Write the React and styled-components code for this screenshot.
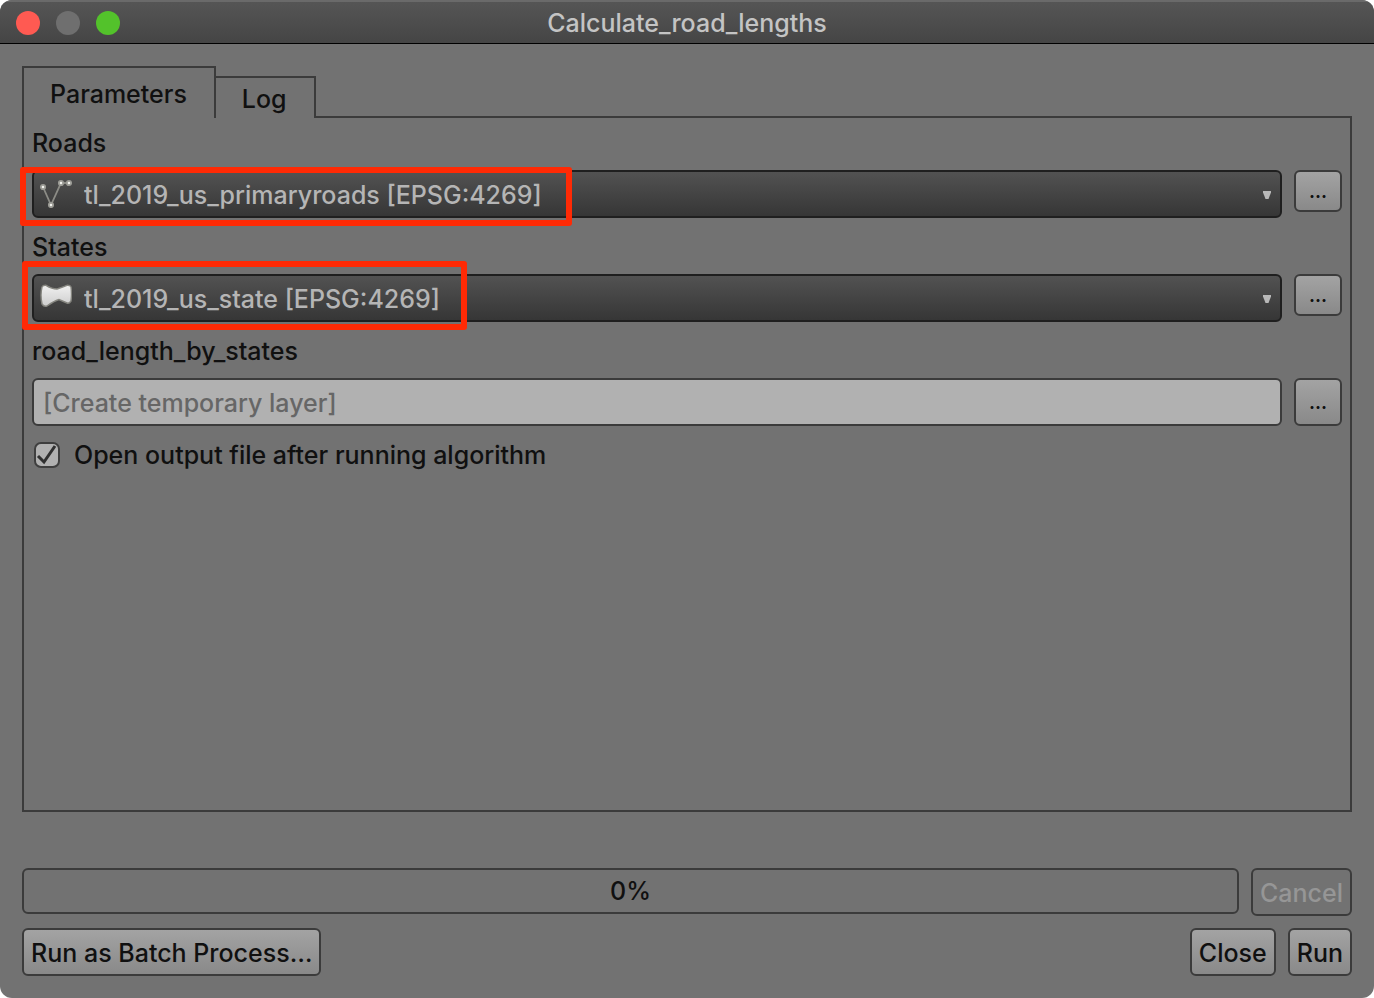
import React, { useState } from "react";
import styled, { createGlobalStyle } from "styled-components";

const GlobalStyle = createGlobalStyle`
  *, *::before, *::after { box-sizing: border-box; }
  body { margin: 0; background: #fff; }
  body, button, input, select {
    font-family: Inter, "Liberation Sans", sans-serif;
    font-size: 25px;
    font-weight: 500;
    line-height: 30px;
    color: #101010;
  }
`;

const Window = styled.div`
  display: flex;
  flex-direction: column;
  min-height: 100vh;
  background: #727272;
  border-radius: 12px;
  overflow: hidden;
`;

const TitleBar = styled.header`
  display: grid;
  grid-template-columns: 1fr auto 1fr;
  align-items: center;
  height: 44px;
  padding: 0 16px;
  background: linear-gradient(#555, #454545);
  border-top: 2px solid #6a6a6a;
  border-bottom: 1px solid #000;
`;

const WindowButtons = styled.div`
  display: flex;
  gap: 16px;
`;

const WindowButton = styled.button`
  width: 24px;
  height: 24px;
  padding: 0;
  border: 0;
  border-radius: 50%;
  background: ${({ $color }) => $color};
`;

const Title = styled.h1`
  margin: 0;
  font-size: 25px;
  font-weight: 500;
  color: #c4c4c4;
`;

const Body = styled.main`
  flex: 1;
  display: flex;
  flex-direction: column;
  padding: 22px;
`;

const TabBar = styled.div`
  display: flex;
  align-items: flex-end;
  &::after {
    content: "";
    flex: 1;
    border-bottom: 2px solid #3b3b3b;
  }
`;

const Tab = styled.button`
  height: ${({ $active }) => ($active ? 52 : 42)}px;
  padding: 2px 27px 0 26px;
  border: 2px solid #3b3b3b;
  border-bottom: 0;
  border-left-width: ${({ $active }) => ($active ? 2 : 0)}px;
  background: none;
`;

const Panel = styled.section`
  flex: 1;
  display: flex;
  flex-direction: column;
  gap: 14px;
  padding: 10px 8px;
  border: 2px solid #3b3b3b;
  border-top: 0;
`;

const Field = styled.div`
  display: flex;
  flex-direction: column;
  gap: 12px;
`;

const FieldRow = styled.div`
  display: flex;
  align-items: flex-start;
  gap: 12px;
`;

const SelectBox = styled.div`
  position: relative;
  flex: 1;
  display: flex;
`;

const Select = styled.select`
  appearance: none;
  flex: 1;
  height: 48px;
  padding: 2px 40px 0 50px;
  border: 2px solid #1f1f1f;
  border-radius: 6px;
  background: linear-gradient(#525252, #363636);
  color: #b5b5b5;
`;

const LayerIcon = styled.svg`
  position: absolute;
  left: 8px;
  top: 6px;
  width: 32px;
  height: 32px;
  pointer-events: none;
`;

const Arrow = styled.svg`
  position: absolute;
  right: 11px;
  top: 21px;
  width: 8px;
  height: 8px;
  pointer-events: none;
`;

const Highlight = styled.span`
  position: absolute;
  left: ${({ $left }) => $left}px;
  top: ${({ $top }) => $top}px;
  bottom: -8px;
  width: ${({ $width }) => $width}px;
  border: 6px solid #ff2a05;
  border-radius: 3px;
  pointer-events: none;
`;

const TextInput = styled.input`
  flex: 1;
  min-width: 0;
  height: 48px;
  padding: 2px 9px 0;
  border: 2px solid #3b3b3b;
  border-radius: 6px;
  background: #b1b1b1;
  &::placeholder { color: #666; opacity: 1; }
`;

const Button = styled.button`
  height: 48px;
  padding: 2px 7px 0;
  border: 2px solid #3b3b3b;
  border-radius: 6px;
  background: linear-gradient(#a3a3a3, #898989);
  &:disabled { background: none; color: #969696; }
`;

const BrowseButton = styled(Button)`
  width: 48px;
  height: ${({ $tall }) => ($tall ? 48 : 42)}px;
  padding: 2px 0 0;
  font-size: 18px;
  font-weight: 700;
`;

const CheckRow = styled.label`
  display: flex;
  align-items: center;
  gap: 14px;
  padding-left: 2px;
`;

const CheckBox = styled.span`
  position: relative;
  display: flex;
`;

const CheckInput = styled.input`
  appearance: none;
  width: 26px;
  height: 26px;
  margin: 0;
  border: 2px solid #3f3f3f;
  border-radius: 7px;
  background: #b1b1b1;
  &:not(:checked) + svg { display: none; }
`;

const CheckMark = styled.svg`
  position: absolute;
  inset: 0;
  width: 26px;
  height: 26px;
  pointer-events: none;
`;

const ProgressRow = styled.div`
  display: flex;
  align-items: flex-start;
  gap: 12px;
  margin-top: 56px;
`;

const Progress = styled.div`
  flex: 1;
  display: flex;
  align-items: center;
  justify-content: center;
  height: 46px;
  border: 2px solid #3b3b3b;
  border-radius: 6px;
`;

const Footer = styled.footer`
  display: flex;
  justify-content: space-between;
  margin-top: 12px;
`;

const FooterActions = styled.div`
  display: flex;
  gap: 12px;
`;

const LineIcon = () => (
  <LayerIcon viewBox="0 0 32 32" aria-hidden="true">
    <path d="M3 11 11 29 21 7H29" fill="none" stroke="#8c8c86" strokeWidth="1.8" />
    {[[3, 11], [11, 29], [21, 7], [29, 7]].map(([x, y]) => (
      <circle key={`${x}-${y}`} cx={x} cy={y} r="2.200" fill="#f2f2ee" stroke="#9a9a94" strokeWidth="1.8" />
    ))}
  </LayerIcon>
);

const PolygonIcon = () => (
  <LayerIcon viewBox="0 0 32 32" aria-hidden="true">
    <defs>
      <linearGradient id="polygon-fill" x1="0" y1="0" x2="0" y2="1">
        <stop offset="0" stopColor="#f0f0f0" />
        <stop offset="1" stopColor="#cdcdcd" />
      </linearGradient>
    </defs>
    <path
      d="M2 7Q3 5 6 5.300Q12 9 17 9Q23 7 27 5.300Q30 5 31 7Q32 14 31 21Q29 24 27 23L19 19.500Q14 21 7 26Q4 27 2 24Q0 15 2 7Z"
      fill="url(#polygon-fill)"
      stroke="#85857f"
      strokeWidth="1.4"
    />
  </LayerIcon>
);

function LayerField({ id, label, layer, icon, mark }) {
  return (
    <Field>
      <label htmlFor={id}>{label}</label>
      <FieldRow>
        <SelectBox>
          <Select id={id}>
            <option>{layer}</option>
          </Select>
          {icon}
          <Arrow viewBox="0 0 8 8" aria-hidden="true">
            <path d="M0 0H8V1.500L5.500 8H2.500L0 1.500Z" fill="#b8b8b8" />
          </Arrow>
          <Highlight $left={mark.left} $top={mark.top} $width={mark.width} />
        </SelectBox>
        <BrowseButton type="button" aria-label={`Browse ${label}`}>…</BrowseButton>
      </FieldRow>
    </Field>
  );
}

export default function App() {
  const [open, setOpen] = useState(true);
  return (
    <>
      <GlobalStyle />
      <Window>
        <TitleBar>
          <WindowButtons>
            <WindowButton $color="#ff5a52" aria-label="Close window" />
            <WindowButton $color="#6f6f6f" aria-label="Minimize window" />
            <WindowButton $color="#53c22b" aria-label="Zoom window" />
          </WindowButtons>
          <Title>Calculate_road_lengths</Title>
        </TitleBar>
        <Body>
          <TabBar role="tablist">
            <Tab role="tab" aria-selected="true" $active>Parameters</Tab>
            <Tab role="tab" aria-selected="false">Log</Tab>
          </TabBar>
          <Panel role="tabpanel">
            <LayerField
              id="roads"
              label="Roads"
              layer="tl_2019_us_primaryroads [EPSG:4269]"
              icon={<LineIcon />}
              mark={{ left: -12, top: -3, width: 552 }}
            />
            <LayerField
              id="states"
              label="States"
              layer="tl_2019_us_state [EPSG:4269]"
              icon={<PolygonIcon />}
              mark={{ left: -10, top: -13, width: 445 }}
            />
            <Field>
              <label htmlFor="output">road_length_by_states</label>
              <FieldRow>
                <TextInput id="output" placeholder="[Create temporary layer]" />
                <BrowseButton type="button" aria-label="Browse output" $tall>…</BrowseButton>
              </FieldRow>
            </Field>
            <CheckRow>
              <CheckBox>
                <CheckInput type="checkbox" checked={open} onChange={(e) => setOpen(e.target.checked)} />
                <CheckMark viewBox="0 0 26 26" aria-hidden="true">
                  <path d="M4 14 10 20 21 4" fill="none" stroke="#303030" strokeWidth="3" />
                </CheckMark>
              </CheckBox>
              Open output file after running algorithm
            </CheckRow>
          </Panel>
          <ProgressRow>
            <Progress role="progressbar" aria-valuemin={0} aria-valuemax={100} aria-valuenow={0}>0%</Progress>
            <Button type="button" disabled>Cancel</Button>
          </ProgressRow>
          <Footer>
            <Button type="button">Run as Batch Process…</Button>
            <FooterActions>
              <Button type="button">Close</Button>
              <Button type="button">Run</Button>
            </FooterActions>
          </Footer>
        </Body>
      </Window>
    </>
  );
}
